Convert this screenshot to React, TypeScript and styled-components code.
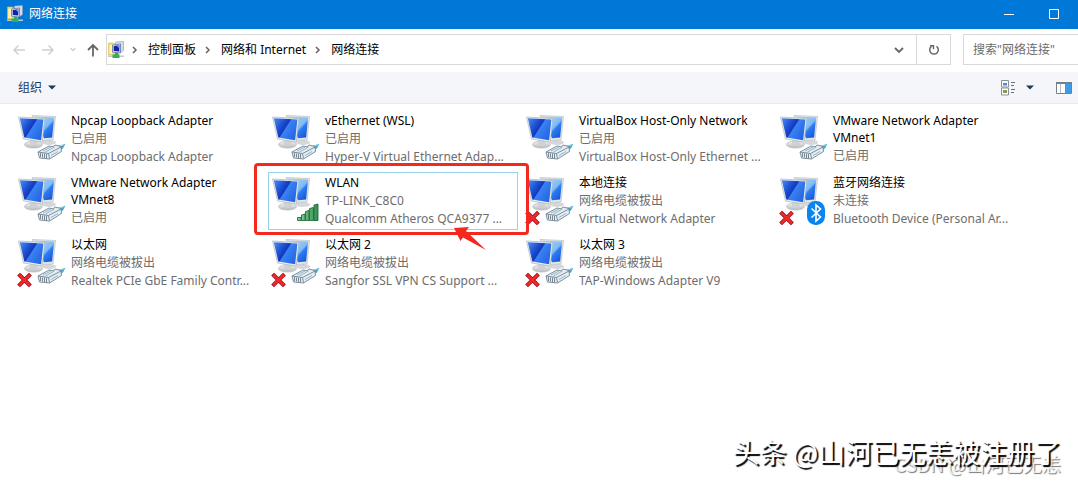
import React from "react";
import styled, { createGlobalStyle } from "styled-components";

const GlobalStyle = createGlobalStyle`
  *, *::before, *::after { box-sizing: border-box; }
  body {
    margin: 0;
    background: #fff;
    font-family: "Noto Sans", "Noto Sans CJK SC", sans-serif;
    font-size: 12px;
    color: #000;
  }
  button, input { font: inherit; color: inherit; }
  button { border: 0; padding: 0; background: none; }
  ul, ol, h1, p { margin: 0; padding: 0; list-style: none; font-weight: 400; font-size: 12px; }
  svg { display: block; flex: none; }
`;

const Window = styled.div`
  position: relative;
  display: flex;
  flex-direction: column;
  min-height: 100vh;
  overflow: hidden;
`;

const TitleBar = styled.header`
  display: flex;
  align-items: center;
  height: 29px;
  padding: 0 2px 2px 7px;
  gap: 6px;
  background: #0078d7;
  color: #fff;
`;

const Title = styled.h1`
  flex: 1;
  line-height: 18px;
`;

const CaptionButtons = styled.div`
  display: flex;
`;

const CaptionButton = styled.button`
  display: grid;
  place-items: center;
  width: 45px;
  height: 26px;
`;

const NavRow = styled.div`
  display: flex;
  align-items: center;
  height: 43px;
  padding: 0 0 2px 12px;
`;

const NavButton = styled.button<{ $width: number }>`
  display: grid;
  place-items: center;
  width: ${(p) => p.$width}px;
  height: 28px;
`;

const UpButton = styled(NavButton)`
  margin-left: 4px;
`;

const AddressBar = styled.div`
  display: flex;
  flex: 1;
  align-items: center;
  height: 31px;
  border: 1px solid #d9d9d9;
  padding-left: 1px;
`;

const Crumbs = styled.ol`
  display: flex;
  flex: 1;
  align-items: center;
`;

const Crumb = styled.li`
  display: flex;
  align-items: center;

  & > svg { margin: 0 9px 0 7px; }
`;

const CrumbLink = styled.a`
  color: #000;
  text-decoration: none;
  line-height: 18px;
  padding-right: 1px;
`;

const AddressButton = styled.button<{ $divided?: boolean }>`
  display: grid;
  place-items: center;
  width: 34px;
  height: 29px;
  border-left: ${(p) => (p.$divided ? "1px solid #d9d9d9" : "0")};
`;

const SearchBox = styled.input`
  width: 115px;
  height: 31px;
  margin-left: 12px;
  border: 1px solid #d9d9d9;
  border-right: 0;
  border-radius: 0;
  padding: 0 9px;
  outline: 0;

  &::placeholder { color: #6d6d6d; opacity: 1; }
`;

const Toolbar = styled.div`
  display: flex;
  align-items: center;
  justify-content: space-between;
  height: 32px;
  padding: 0 6px 0 18px;
  background: #f4f6f9;
  border-bottom: 1px solid #e6e9ed;
  color: #1e395b;
`;

const MenuButton = styled.button`
  display: flex;
  align-items: center;
  gap: 6px;
  line-height: 18px;
`;

const ViewTools = styled.div`
  display: flex;
  align-items: center;
  gap: 22px;
`;

const ViewButton = styled.button`
  display: flex;
  align-items: center;
  gap: 10px;
`;

const Connections = styled.ul`
  display: grid;
  grid-template-columns: repeat(auto-fill, 250px);
  gap: 4px;
  padding: 6px 10px 6px 14px;
`;

const Item = styled.li`
  position: relative;
`;

const Tile = styled.button<{ $selected?: boolean }>`
  display: flex;
  gap: 2px;
  width: 100%;
  height: 58px;
  padding: 1px;
  border: 1px solid ${(p) => (p.$selected ? "#99d1e8" : "transparent")};
  text-align: left;
`;

const TileText = styled.span`
  display: flex;
  flex: 1;
  flex-direction: column;
  padding-left: 1px;
`;

const Name = styled.span`
  line-height: 17px;
  padding-bottom: 1px;
`;

const Detail = styled.span`
  line-height: 18px;
  color: #6d6d6d;
  white-space: nowrap;
`;

const Highlight = styled.div`
  position: absolute;
  z-index: 1;
  inset: -9px -11px -5px -14px;
  border: 3px solid #f5281d;
  border-radius: 4px;
  pointer-events: none;
`;

const Pointer = styled.svg`
  position: absolute;
  z-index: 2;
  left: 184px;
  top: 54px;
  pointer-events: none;
`;

const Watermark = styled.p`
  position: absolute;
  right: 17px;
  bottom: 11px;
  font-family: "Noto Sans CJK SC", sans-serif;
  font-size: 27px;
  line-height: 40px;
  color: #fff;
  text-shadow: 2px 2px 1px #000;
  white-space: nowrap;
`;

const SiteMark = styled(Watermark)`
  bottom: 6px;
  font-size: 19px;
  line-height: 26px;
  color: #fffc;
  text-shadow: 1px 1px 1px #777;
`;

const FolderIcon = () => (
  <svg width="16" height="18" viewBox="0 0 16 18" aria-hidden="true">
    <path d="M.5 2h5l1 1h4v11H.5z" fill="#f5dc73" stroke="#d9b64a" strokeWidth=".6" />
    <path d="M1.500 4h3v9h-3z" fill="#fff4b5" />
    <path d="M7.500 1l8-.5v9L13.500 11h-6z" fill="#d6dce6" stroke="#8c9ab4" strokeWidth=".6" />
    <path d="M4.500 4l8-1v9l-8-.8z" fill="#dfe7f5" stroke="#6073a8" strokeWidth=".8" />
    <path d="M5.700 5l5.600-.7v6.200l-5.600-.6z" fill="#1420a8" />
    <path d="M8.500 4.700l2.800-.4v3z" fill="#6d92f0" />
    <path d="M7 12h3v2H7z" fill="#2fa866" />
    <path d="M0 14.500h16V16H0z" fill="#bfc9d1" />
    <path d="M4.500 13.500h7v3.500h-7z" fill="#28b45f" />
  </svg>
);

const Chevron = () => (
  <svg width="8" height="10" viewBox="0 0 8 10" aria-hidden="true">
    <path d="M2 2l3 3-3 3" fill="none" stroke="#666" strokeWidth="1.500" />
  </svg>
);

const Caret = () => (
  <svg width="8" height="5" viewBox="0 0 8 5" aria-hidden="true">
    <path d="M0 .5h8L4 4.500z" fill="#1e395b" />
  </svg>
);

const Arrow = ({ d, color, width = 1.5 }: { d: string; color: string; width?: number }) => (
  <svg width="14" height="14" viewBox="0 0 14 14" fill="none" stroke={color} strokeWidth={width} aria-hidden="true">
    <path d={d} />
  </svg>
);

type Badge = "cable" | "signal" | "bluetooth";

const GradientDefs = styled.svg`
  position: absolute;
`;

const Gradients = () => (
  <GradientDefs width="0" height="0" aria-hidden="true">
    <defs>
      <linearGradient id="screen" x1="0" y1="0.1" x2="1" y2=".7">
        <stop offset="0" stopColor="#4a86ea" />
        <stop offset=".3" stopColor="#1f55d6" />
        <stop offset=".5" stopColor="#1238bd" />
        <stop offset=".54" stopColor="#3a82f2" />
        <stop offset="1" stopColor="#2465e4" />
      </linearGradient>
      <linearGradient id="backScreen" x1="0" y1="0" x2="1" y2="1">
        <stop offset="0" stopColor="#b4dafb" />
        <stop offset=".55" stopColor="#7dbbf7" />
        <stop offset=".62" stopColor="#2e7cf0" />
        <stop offset="1" stopColor="#0f4cd0" />
      </linearGradient>
      <linearGradient id="stand" x1="0" y1="0" x2="0" y2="1">
        <stop offset="0" stopColor="#f4f4f4" />
        <stop offset="1" stopColor="#b5b9bd" />
      </linearGradient>
      <linearGradient id="bar" x1="0" y1="0" x2="1" y2="0">
        <stop offset="0" stopColor="#8fd0a0" />
        <stop offset="1" stopColor="#2f9150" />
      </linearGradient>
    </defs>
  </GradientDefs>
);

const CableBadge = () => (
  <g>
    <path d="M38 36c4-3 8-2.500 11.500-4.500l-2.500 5-7 3z" fill="#46abcb" />
    <path d="M40 35.500l8-3" stroke="#9be0ef" />
    <path d="M22 40l11-6 4 .8 2-1.800 6 1.500.5 5-12 7.500-10-1z" fill="#e6edf1" stroke="#6b8598" strokeWidth=".9" />
    <path d="M22 40l10.500 1.500 1 5M32.500 41.500l12.500-6.500" fill="none" stroke="#6b8598" strokeWidth=".9" />
    <path d="M24.500 41v4M26.500 41.500v4M28.500 41.500v4.500M30.500 42v4.500" stroke="#6f7a82" strokeWidth=".9" />
    <path d="M27 39l8-4M29.500 40l9-5M35 43.500l7-4" stroke="#8fadc0" strokeWidth=".9" />
  </g>
);

const SignalBadge = () => (
  <g fill="url(#bar)" stroke="#236b3b" strokeWidth=".9">
    <path d="M27.500 43.500h3.500v3h-3.500zM31.500 41l3.500-1v6.500h-3.500zM35.500 37.500l3.500-1v10h-3.500zM39.500 34.500l4-1v13h-4zM44 31l4-1v16.500h-4z" />
  </g>
);

const BluetoothBadge = () => (
  <g>
    <rect x="29" y="27" width="18" height="24" rx="8.500" fill="#0a84f0" />
    <path d="M33.500 34.500l9 8.500-4.500 4V31l4.500 4-9 8.500" fill="none" stroke="#fff" strokeWidth="1.600" />
  </g>
);

const AdapterIcon = ({ badge, failed }: { badge: Badge; failed?: boolean }) => (
  <svg width="52" height="52" viewBox="0 0 52 52" aria-hidden="true">
    <ellipse cx="33" cy="30.500" rx="7" ry="2.500" fill="#d5d8da" />
    <path d="M16 3.500l23.500 1-2.500 23.500-11 .5z" fill="#e4e7e9" stroke="#b9bec2" strokeWidth=".7" />
    <path d="M17.500 4.600l20.600 1-2 20-8 .6z" fill="url(#backScreen)" />
    <ellipse cx="17.500" cy="32.500" rx="9" ry="3.600" fill="url(#stand)" stroke="#b9bdc0" strokeWidth=".7" />
    <path d="M14 27l7 1 1 5h-8z" fill="#cfd2d5" />
    <path d="M2.500 5L28.800 6.500l-2.600 23.500L7.500 27z" fill="#eceff1" stroke="#b0b5b9" strokeWidth=".7" />
    <path d="M3.800 6.200L27.400 7.600l-2.300 20.600L8.300 25.500z" fill="url(#screen)" />
    {badge === "cable" && <CableBadge />}
    {badge === "signal" && <SignalBadge />}
    {badge === "bluetooth" && <BluetoothBadge />}
    {failed && (
      <g strokeLinecap="square">
        <path d="M4 39.500l9 9M13 39.500l-9 9" stroke="#a30d12" strokeWidth="4" />
        <path d="M4 39.500l9 9M13 39.500l-9 9" stroke="#ee2a2e" strokeWidth="2.500" />
      </g>
    )}
  </svg>
);

const DetailsViewIcon = () => (
  <svg width="16" height="16" viewBox="0 0 16 16" aria-hidden="true">
    <path d="M1.500.500h7v6.500h-7zM1.500 8h7v7h-7z" fill="#fff" stroke="#8a9199" />
    <path d="M3 3h4v2.500H3z" fill="#4c8bd8" />
    <path d="M3 10h4v3H3z" fill="#8a9a4c" />
    <path d="M11 2.500h4M11 5.500h3M11 9.500h4M11 12.500h3" stroke="#6b7077" />
  </svg>
);

const PreviewPaneIcon = () => (
  <svg width="16" height="12" viewBox="0 0 16 12" aria-hidden="true">
    <path d="M.5.500h15v11H.5z" fill="#fff" stroke="#76808c" />
    <path d="M0 0h16v2H0z" fill="#76808c" />
    <path d="M4.500 2v9" stroke="#b8bec6" />
    <path d="M9 2h6v9H9z" fill="#3d9be8" />
  </svg>
);

type Connection = {
  name: string;
  details: string[];
  badge: Badge;
  failed?: boolean;
  selected?: boolean;
};

const connections: Connection[] = [
  { name: "Npcap Loopback Adapter", details: ["已启用", "Npcap Loopback Adapter"], badge: "cable" },
  { name: "vEthernet (WSL)", details: ["已启用", "Hyper-V Virtual Ethernet Adap..."], badge: "cable" },
  { name: "VirtualBox Host-Only Network", details: ["已启用", "VirtualBox Host-Only Ethernet ..."], badge: "cable" },
  { name: "VMware Network Adapter VMnet1", details: ["已启用"], badge: "cable" },
  { name: "VMware Network Adapter VMnet8", details: ["已启用"], badge: "cable" },
  { name: "WLAN", details: ["TP-LINK_C8C0", "Qualcomm Atheros QCA9377 ..."], badge: "signal", selected: true },
  { name: "本地连接", details: ["网络电缆被拔出", "Virtual Network Adapter"], badge: "cable", failed: true },
  { name: "蓝牙网络连接", details: ["未连接", "Bluetooth Device (Personal Ar..."], badge: "bluetooth", failed: true },
  { name: "以太网", details: ["网络电缆被拔出", "Realtek PCIe GbE Family Contr..."], badge: "cable", failed: true },
  { name: "以太网 2", details: ["网络电缆被拔出", "Sangfor SSL VPN CS Support ..."], badge: "cable", failed: true },
  { name: "以太网 3", details: ["网络电缆被拔出", "TAP-Windows Adapter V9"], badge: "cable", failed: true },
];

const crumbs = ["控制面板", "网络和 Internet", "网络连接"];

export default function App() {
  return (
    <Window>
      <GlobalStyle />
      <Gradients />
      <TitleBar>
        <FolderIcon />
        <Title>网络连接</Title>
        <CaptionButtons>
          <CaptionButton aria-label="最小化">
            <svg width="10" height="10" viewBox="0 0 10 10"><path d="M0 5.500h10" stroke="#fff" /></svg>
          </CaptionButton>
          <CaptionButton aria-label="最大化">
            <svg width="10" height="10" viewBox="0 0 10 10"><path d="M.5.500h9v9h-9z" fill="none" stroke="#fff" /></svg>
          </CaptionButton>
        </CaptionButtons>
      </TitleBar>

      <NavRow>
        <NavButton $width={14} aria-label="后退"><Arrow color="#d0d0d0" d="M13 7H2M6.500 2.500L2 7l4.500 4.500" /></NavButton>
        <NavButton $width={44} aria-label="前进"><Arrow color="#d0d0d0" d="M1 7h11M7.500 2.500L12 7l-4.500 4.500" /></NavButton>
        <NavButton $width={6} aria-label="最近浏览的位置">
          <svg width="6" height="5" viewBox="0 0 6 5"><path d="M.5 1L3 3.500 5.500 1" fill="none" stroke="#cfcfcf" strokeWidth="1.300" /></svg>
        </NavButton>
        <UpButton $width={26} aria-label="向上"><Arrow color="#666" width={1.8} d="M7 13.500V2M2 7l5-5 5 5" /></UpButton>
        <AddressBar>
          <FolderIcon />
          <Crumbs>
            {crumbs.map((text) => (
              <Crumb key={text}>
                <Chevron />
                <CrumbLink href="#">{text}</CrumbLink>
              </Crumb>
            ))}
          </Crumbs>
          <AddressButton aria-label="历史记录">
            <svg width="10" height="8" viewBox="0 0 10 8"><path d="M1 2l4 4 4-4" fill="none" stroke="#666" strokeWidth="1.800" /></svg>
          </AddressButton>
          <AddressButton $divided aria-label="刷新">
            <svg width="12" height="12" viewBox="0 0 12 12">
              <path d="M8.500 2.300A4.300 4.300 0 1 1 3.500 2.300" fill="none" stroke="#666" strokeWidth="1.500" />
              <path d="M2 1.700h3.500v3.500" fill="none" stroke="#666" strokeWidth="1.400" />
            </svg>
          </AddressButton>
        </AddressBar>
        <SearchBox type="text" aria-label="搜索" placeholder={'搜索"网络连接"'} />
      </NavRow>

      <Toolbar>
        <MenuButton>组织 <Caret /></MenuButton>
        <ViewTools>
          <ViewButton aria-label="更改视图"><DetailsViewIcon /><Caret /></ViewButton>
          <ViewButton aria-label="预览窗格"><PreviewPaneIcon /></ViewButton>
        </ViewTools>
      </Toolbar>

      <Connections>
        {connections.map((c) => (
          <Item key={c.name}>
            <Tile $selected={c.selected}>
              <AdapterIcon badge={c.badge} failed={c.failed} />
              <TileText>
                <Name>{c.name}</Name>
                {c.details.map((line) => <Detail key={line}>{line}</Detail>)}
              </TileText>
            </Tile>
            {c.selected && (
              <>
                <Highlight />
                <Pointer width="36" height="26" viewBox="0 0 36 26" aria-hidden="true">
                  <path d="M2 2l15-1-3 4 20 19L11 11.500 8.500 15z" fill="#f5281d" />
                </Pointer>
              </>
            )}
          </Item>
        ))}
      </Connections>

      <SiteMark>CSDN @山河已无恙</SiteMark>
      <Watermark>头条 @山河已无恙被注册了</Watermark>
    </Window>
  );
}
